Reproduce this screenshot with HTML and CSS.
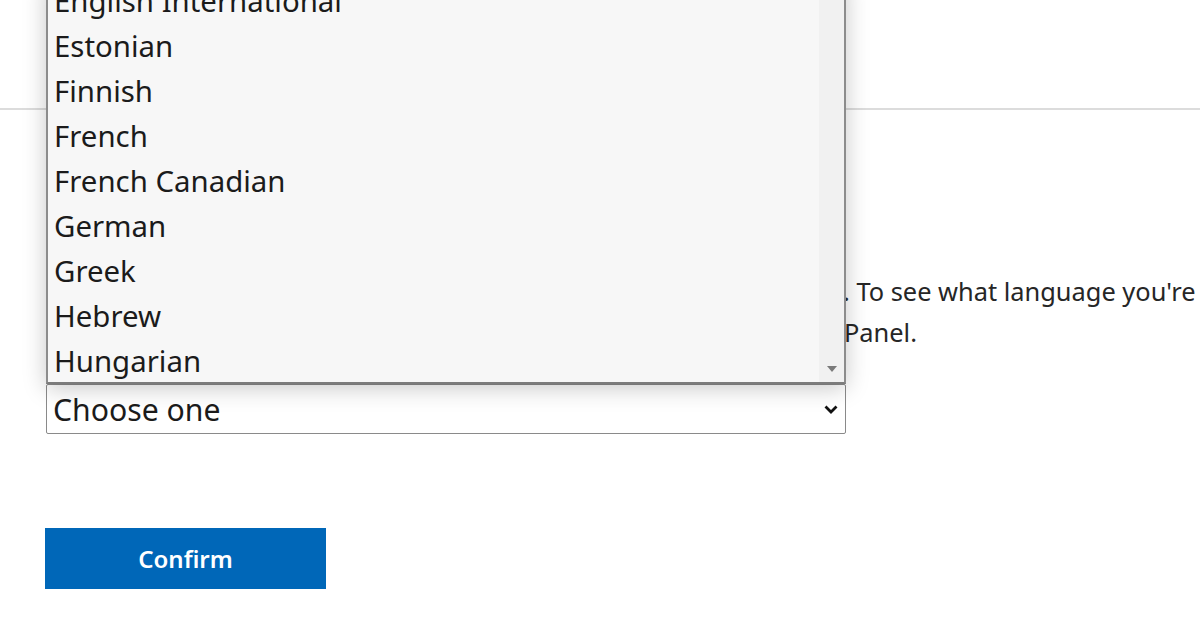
FILE: index.html
```html
<!DOCTYPE html>
<html lang="en">
<head>
<meta charset="utf-8">
<title>Choose a language</title>
<link rel="stylesheet" href="styles.css">
</head>
<body>
<div class="page">
  <header class="topbar"></header>
  <main class="content">
    <h1 class="title">Choose the language</h1>
    <p class="desc">
      <span class="line"><span class="covered">Select the language you want to use in Windows Setup</span>. To see what language you're</span>
      <span class="line"><span class="covered">currently using, go to Region in Control </span>Panel.</span>
    </p>
    <div class="field">
      <div class="select">
        <span class="select-text">Choose one</span>
        <svg class="chevron" width="14" height="9" viewBox="0 0 14 9"><path d="M1.5 1.5 L7 7 L12.5 1.5" fill="none" stroke="#111" stroke-width="2.8"/></svg>
      </div>
      <div class="listbox">
        <ul class="options">
          <li>English International</li>
          <li>Estonian</li>
          <li>Finnish</li>
          <li>French</li>
          <li>French Canadian</li>
          <li>German</li>
          <li>Greek</li>
          <li>Hebrew</li>
          <li>Hungarian</li>
        </ul>
        <div class="scrollbar">
          <svg class="sb-arrow" width="10" height="6" viewBox="0 0 10 6"><path d="M0 0 H10 L5 6 Z" fill="#7a7a7a"/></svg>
        </div>
      </div>
    </div>
    <button class="confirm">Confirm</button>
  </main>
</div>
</body>
</html>
```
FILE: styles.css
```css
html, body {
  margin: 0;
  padding: 0;
  background: #fff;
}
body {
  font-family: "Noto Sans", "Open Sans", sans-serif;
  color: #1b1b1b;
  overflow: hidden;
  width: 1200px;
  height: 625px;
}
.page {
  position: relative;
  width: 1200px;
  height: 625px;
}
.topbar {
  height: 108px;
  border-bottom: 2px solid #dcdcdc;
}
.content {
  padding: 0 0 0 46px;
}
.title {
  margin: 40px 0 0;
  height: 50px;
  font-size: 28px;
  font-weight: 600;
  visibility: hidden;
}
.desc {
  margin: 71px 0 0;
  font-size: 25.4px;
  line-height: 41px;
  color: #262626;
}
.line {
  display: block;
  white-space: nowrap;
}
.covered {
  display: inline-block;
  width: 797px;
  overflow: hidden;
  white-space: nowrap;
  vertical-align: top;
  color: transparent;
}
.line:nth-child(2) .covered {
  width: 798px;
}
.field {
  position: relative;
  width: 800px;
  margin-top: 31px;
}
.select {
  box-sizing: border-box;
  height: 50px;
  border: 1px solid #8a8a8a;
  border-radius: 2px;
  display: flex;
  align-items: center;
  justify-content: space-between;
  padding: 0 7px 0 6px;
  background: #fff;
}
.select-text {
  font-size: 30.2px;
  color: #1b1b1b;
}
.chevron {
  display: block;
  margin-top: 1px;
}
.listbox {
  position: absolute;
  left: 0;
  bottom: 50px;
  width: 800px;
  height: 406px;
  box-sizing: border-box;
  background: #f7f7f7;
  border-left: 2px solid #8c8c8c;
  border-right: 2px solid #8c8c8c;
  border-bottom: 2px solid #7c7c7c;
  box-shadow: 0 4px 22px rgba(0,0,0,0.22);
  display: flex;
  overflow: hidden;
}
.options {
  list-style: none;
  margin: 0;
  padding: 0;
  flex: 1;
  margin-top: 1px;
}
.options li {
  height: 45px;
  line-height: 45px;
  font-size: 29.4px;
  padding-left: 6px;
  color: #1b1b1b;
  white-space: nowrap;
}
.scrollbar {
  width: 25px;
  background: #f1f1f1;
  display: flex;
  flex-direction: column;
  justify-content: flex-end;
  align-items: center;
  padding-bottom: 10px;
}
.sb-arrow {
  display: block;
}
.confirm {
  display: block;
  margin: 94px 0 0 -1px;
  width: 281px;
  height: 61px;
  border: none;
  background: #0067b8;
  color: #fff;
  font-family: "Noto Sans", "Open Sans", sans-serif;
  font-size: 24px;
  font-weight: 600;
  padding: 0;
}
```
